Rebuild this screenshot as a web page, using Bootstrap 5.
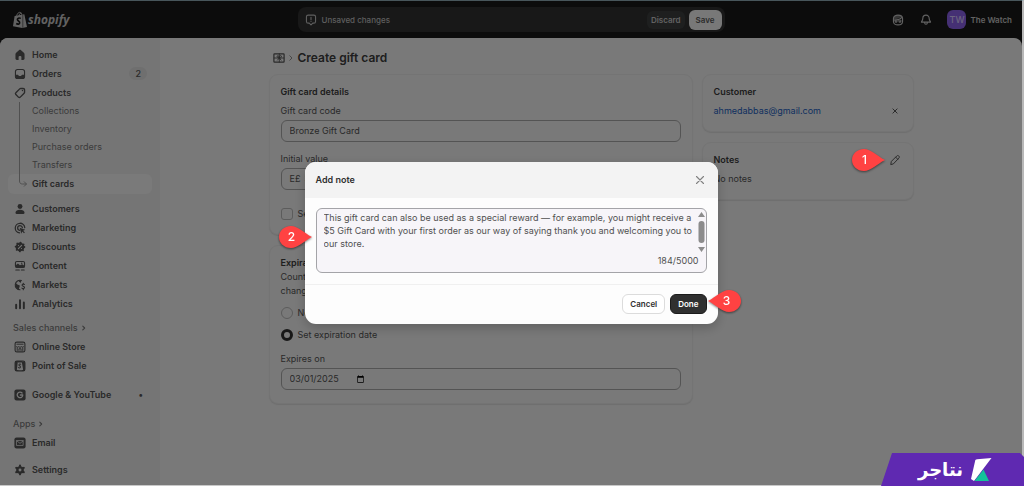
<!DOCTYPE html>
<html lang="en">
<head>
<meta charset="utf-8">
<meta name="viewport" content="width=device-width, initial-scale=1">
<title>Create gift card</title>
<link href="https://cdn.jsdelivr.net/npm/bootstrap@5.3.0/dist/css/bootstrap.min.css" rel="stylesheet">
<style>
  :root { --ink: #545454; --muted: #787878; --line: #a8a8a8; }
  body { font-family: Inter, "Liberation Sans", sans-serif; font-size: 9px; line-height: 14px; color: var(--ink); background: #181818; }
  .frame { border-top: 1px solid #90acb6; border-right: 2px solid #b8b8b8; border-bottom: 1px solid #c8c8c8; }
  .ico { width: 14px; height: 14px; flex: none; fill: none; stroke: currentColor; stroke-width: 1.6; stroke-linecap: round; stroke-linejoin: round; }
  .ico .solid { fill: currentColor; stroke: none; }
  .ico .cut { stroke: #ebebeb; }
  a { text-decoration: none; color: inherit; }
  .plain { border: 0; background: none; padding: 0; color: inherit; display: flex; }

  .topbar { display: grid; grid-template-columns: 1fr minmax(0, 427px) 1fr; height: 37px; color: #c4c4c4; font-size: 8px; }
  .wordmark { font-family: "Open Sans", sans-serif; font-style: italic; font-weight: 700; font-size: 12px; line-height: 18px; }
  .savebar { background: #303030; border-radius: 8px; height: 25px; color: #bdbdbd; font-weight: 500; padding: 0 3px 0 6px; }
  .savebar button { font-weight: 600; border: 0; border-radius: 6px; padding: 2px 4px; }
  .savebar .save { padding: 3px 7px; background: #f0f0f0; color: #585858; }
  .discard { background: #3c3f3f; color: #c4c4c4; }
  .account { gap: 14px; padding-right: 10px; }
  .avatar { width: 19px; height: 19px; border-radius: 6px; background: #8a60e8; color: #d8c8ff; font-size: 9px; font-weight: 500; }

  .shell { background: #f2f2f2; border-radius: 8px 8px 0 0; overflow: hidden; }
  .side { width: 160px; background: #ebebeb; padding: 7px 8px 0; font-weight: 600; }
  .side ul { list-style: none; margin: 0; padding: 0; }
  .side li > a { display: flex; align-items: center; gap: 5px; height: 19px; padding: 0 5px; border-radius: 6px; }
  .side .subnav a { height: 18px; padding-left: 24px; font-weight: 400; color: var(--muted); }
  .side .subnav .current { height: 20px; background: #f4f4f4; color: var(--ink); font-weight: 600; }
  .side .group { margin-top: 5px; }
  .side .apart { margin-top: 10px; }
  .branch { position: absolute; left: 11px; top: 0; width: 8px; height: 88px; color: #a0a0a0; }
  .side .heading { font-weight: 500; color: var(--muted); padding-left: 5px; height: 19px; }
  .side .heading .ico { width: 12px; height: 12px; stroke-width: 2; }
  .count { background: #dedede; border-radius: 7px; padding: 0 6px; font-weight: 500; line-height: 13px; margin-left: auto; }

  .content { width: 100%; max-width: 645px; padding-top: 11px; }
  .crumbs { padding-left: 4px; margin-bottom: 7px; }
  .crumbs .ico { width: 12px; height: 12px; stroke-width: 2; }
  .title { font-size: 12px; line-height: 18px; font-weight: 600; margin: 0 0 0 5px; }
  .columns { display: grid; grid-template-columns: 2fr 1fr; gap: 9px; align-items: start; }
  .stack { display: grid; gap: 10px; }
  .panel { background: #f2f2f2; border: 1px solid #e8e8e8; border-radius: 9px; box-shadow: 0 1px 1px #dcdcdc; padding: 10px 11px 13px; }
  .panel h2 { font-size: 9px; line-height: 14px; font-weight: 600; margin: 0; }
  .panel h2, .title { color: #3c3c3c; }
  .caption { display: block; margin-top: 10px; }
  h2 + .caption, .row-line { margin-top: 5px; }
  .field { display: flex; align-items: center; border: 1px solid var(--line); border-radius: 6px; height: 22px; padding: 0 8px; margin-top: 2px; }
  .field input { border: 0; background: transparent; padding: 0; color: inherit; font: inherit; min-width: 0; outline: 0; }
  .field input[type=date] { width: 77px; }
  .choice { display: flex; align-items: center; gap: 5px; margin-top: 8px; }
  .field + .choice { margin-top: 17px; }
  .tick { appearance: none; width: 12px; height: 12px; margin: 0; border: 1px solid #b8b8b8; border-radius: 3px; }
  .tick[type=radio] { border-radius: 50%; }
  .tick[type=radio]:checked { border: 3px solid #303030; }
  .mail { color: #1c5fc0; }

  .modal { padding-right: 2px; }
  .modal-backdrop { --bs-backdrop-bg: #000; --bs-backdrop-opacity: .5; width: calc(100vw - 2px); height: calc(100vh - 1px); }
  .modal-dialog { --bs-modal-width: 413px; }
  .modal-content { border: 0; border-radius: 11px; background: #fdfdfd; color: #303030; box-shadow: 0 4px 12px rgba(0,0,0,.2); }
  .modal-header { background: #f3f3f3; border: 0; border-radius: 11px 11px 0 0; padding: 0 11px; height: 36px; }
  .modal-header h1 { font-size: 9px; line-height: 14px; font-weight: 600; margin: 0; }
  .modal-body { padding: 10px 11px 11px; }
  .modal-footer { border-top: 1px solid #f0f0f0; padding: 9px 11px 10px; gap: 5px; }
  .modal-footer > * { margin: 0; }
  .modal-footer button { font-size: 8px; line-height: 14px; font-weight: 600; border-radius: 6px; padding: 2px 7px; border: 1px solid #dcdcdc; background: #fff; color: #303030; }
  .modal-footer .done { background: #303030; border-color: #1c1c1c; color: #fff; }
  .note { border: 1px solid #a4a4a8; border-radius: 6px; background: #f7f5f9; padding: 2px 7px 4px; color: #505050; }
  .note textarea { display: block; width: 100%; height: 43px; border: 0; padding: 0; background: transparent; font: inherit; line-height: 13px; color: inherit; resize: none; overflow: hidden; outline: 0; white-space: pre; }
  .scroller { position: absolute; right: 1px; top: 2px; width: 7px; height: 42px; }

  .pin { position: absolute; width: 34px; height: 24px; z-index: 1070; color: #fff; font-size: 12px; line-height: 22px; text-align: center; font-weight: 500; }
  .pin svg { position: absolute; inset: 0; filter: drop-shadow(0 1px 1px rgba(0,0,0,.5)); }
  .pin span { position: relative; display: block; width: 26px; }
  .pin.flip svg { transform: scaleX(-1); }
  .pin.flip span { margin-left: 7px; }
  .pin-notes { right: 16px; top: -4px; }
  .pin-text { left: -38px; top: 17px; }
  .pin-done { right: -34px; top: -4px; }
  .brand-tag { position: fixed; right: 0; bottom: 0; width: 143px; height: 33px; z-index: 1080; background: #5f29b1; clip-path: polygon(11px 0, 139px 0, 143px 4px, 143px 100%, 0 100%); color: #fff; padding-right: 32px; gap: 8px; font-family: "DejaVu Sans", sans-serif; font-weight: 700; font-size: 18px; line-height: 24px; }
</style>
</head>
<body>
<div class="frame min-vh-100 d-flex flex-column">
  <header class="topbar align-items-center">
    <a href="#" class="d-flex align-items-center ms-2 ps-1" aria-label="Shopify">
      <svg width="16" height="18" viewBox="0 0 16 18" aria-hidden="true"><path fill="#c4c4c4" d="M2.6 5 11 3.4l1.300-.1L15 16 10.300 17 1 15.300Z"/><path fill="none" stroke="#c4c4c4" d="M4.500 5.500C5 2.500 7 .8 8.300 1.500S10 4 10 4M7 5c.2-2 1.500-3.500 2.600-2.800"/><path d="M10.800 3.600v13.200" stroke="#181818" stroke-width=".5"/><path fill="none" stroke="#181818" stroke-width="1.600" d="M8.800 7.400C7 6.500 5.200 7.200 5.400 8.700c.2 1.300 2.500 1.400 2.300 3.100-.2 1.500-2 1.700-3.500.7"/></svg>
      <span class="wordmark">shopify</span>
    </a>
    <div class="savebar d-flex align-items-center gap-1">
      <svg class="ico" viewBox="0 0 20 20"><path d="M6 3h8a2.500 2.500 0 0 1 2.500 2.500V12a2.500 2.500 0 0 1-2.500 2.500h-1.500L10 17l-2.500-2.500H6A2.500 2.500 0 0 1 3.500 12V5.500A2.500 2.500 0 0 1 6 3ZM10 6v3.500M10 12v.1"/></svg>
      <span class="me-auto">Unsaved changes</span>
      <button type="button" class="discard">Discard</button>
      <button type="button" class="save">Save</button>
    </div>
    <div class="account d-flex align-items-center justify-content-end">
      <button class="plain" type="button" aria-label="Sidekick"><svg class="ico" viewBox="0 0 20 20"><path d="M3.500 8c0-3 3-5 6.500-5s6.500 2 6.500 5v4c0 3-3 5-6.500 5s-6.500-2-6.500-5ZM4 10c5 0 9-1 11-3.500M6 10.500V12q0 1 1.200 1T8.500 12v-1.500M11.500 10.500V12q0 1 1.200 1T14 12v-1.500"/><path class="solid" d="M4 8c0-3 3-5 6-5 3 0 4 1 5 2-2 2-6 4-11 4Z" opacity=".5"/></svg></button>
      <button class="plain" type="button" aria-label="Notifications"><svg class="ico" viewBox="0 0 20 20"><path d="M10 3c-2.800 0-4.500 2-4.500 4.500 0 3-1.500 4-2 5.500h13c-.5-1.500-2-2.500-2-5.500C14.500 5 12.800 3 10 3ZM8 13.500c0 3.500 4 3.500 4 0"/></svg></button>
      <button class="plain align-items-center gap-1" type="button"><span class="avatar d-flex align-items-center justify-content-center">TW</span><span class="fw-semibold">The Watch</span></button>
    </div>
  </header>

  <div class="shell d-flex flex-grow-1">
    <nav class="side flex-shrink-0" aria-label="Main">
      <ul>
        <li><a href="#"><svg class="ico" viewBox="0 0 20 20"><path class="solid" d="M3.500 9c0-1 .3-1.700 1-2.300l4-3.600c.9-.8 2.100-.8 3 0l4 3.600c.7.600 1 1.300 1 2.300v6c0 1.200-.8 2-2 2H12v-4c0-2-4-2-4 0v4H5.500c-1.200 0-2-.8-2-2Z"/></svg>Home</a></li>
        <li><a href="#"><svg class="ico" viewBox="0 0 20 20"><rect x="3.500" y="3.500" width="13" height="13" rx="3"/><path class="solid" d="M3.500 11H7c.6 0 .8 2 3 2s2.400-2 3-2h3.500v3a3 3 0 0 1-3 3h-7a3 3 0 0 1-3-3Z"/></svg>Orders<span class="count">2</span></a></li>
        <li><a href="#"><svg class="ico" viewBox="0 0 20 20"><path d="M11 3.500h3.500c1.200 0 2 .8 2 2V9c0 .6-.2 1-.6 1.400l-5.500 5.500c-.8.8-1.900.8-2.700 0l-3.600-3.600c-.8-.8-.8-1.900 0-2.700l5.500-5.500c.4-.4.800-.6 1.400-.6Z" stroke-width="2"/><circle class="solid" cx="13.500" cy="6.500" r="1"/></svg>Products</a>
          <ul class="subnav position-relative">
            <li><a href="#">Collections</a></li>
            <li><a href="#">Inventory</a></li>
            <li><a href="#">Purchase orders</a></li>
            <li><a href="#">Transfers</a></li>
            <li><a href="#" class="current" aria-current="page">Gift cards</a></li>
            <li class="branch" aria-hidden="true"><svg class="d-block" width="8" height="88" fill="none" stroke="currentColor"><path d="M.5 0v79c0 2 1 3 3 3h4M5 79.500l2.500 2.500L5 84.500"/></svg></li>
          </ul>
        </li>
      </ul>
      <ul class="group">
        <li><a href="#"><svg class="ico" viewBox="0 0 20 20"><circle class="solid" cx="10" cy="6.500" r="3.500"/><path class="solid" d="M3.500 15.500c0-3 3-4.500 6.500-4.500s6.500 1.500 6.500 4.500c0 1-.6 1.500-1.500 1.500H5c-.9 0-1.500-.5-1.500-1.500Z"/></svg>Customers</a></li>
        <li><a href="#"><svg class="ico" viewBox="0 0 20 20"><path d="M9.500 16.800A6.800 6.800 0 1 1 16.800 9.500M9.500 13.300A3.400 3.400 0 1 1 13.400 9.500" stroke-width="1.800"/><path class="solid" d="m9.500 9.500 8 3-3 1.300 2.500 2.500-1.300 1.300-2.500-2.500-1.200 3Z"/></svg>Marketing</a></li>
        <li><a href="#"><svg class="ico" viewBox="0 0 20 20"><circle class="solid" cx="10" cy="10" r="6.300"/><circle cx="10" cy="10" r="6.300" stroke-width="2.600" stroke-dasharray=".1 4.850"/><path class="cut" d="m7.700 12.300 4.600-4.600M7.800 7.900h.1M12.100 12.200h.1"/></svg>Discounts</a></li>
        <li><a href="#"><svg class="ico" viewBox="0 0 20 20"><rect x="3.500" y="3.500" width="13" height="8.500" rx="2"/><path class="solid" d="m4 9 3-2.500L10 9l3-1.500 3.500 2V12H4Z"/><circle class="solid" cx="12.500" cy="6" r="1"/><path d="M4 15.800h5M12 15.800h4"/></svg>Content</a></li>
        <li><a href="#"><svg class="ico" viewBox="0 0 20 20"><path d="M12 3.500A6.800 6.800 0 1 0 10 16.800"/><path class="solid" d="M4 8c2 0 2 2 4 2s2 2 1 3.500 0 2 0 3.300C6 16.500 3 13.500 3.500 9ZM8 3.500c0 2 1.500 1.500 2 3s2-.5 2-3.500Z"/><path d="M16.300 9.300c-1.500-1-3.300-.3-3.300 1s3.500 1.500 3.500 3.200-2.300 2-3.800 1M14.700 7.500v1.200M14.700 15.500v1.300"/></svg>Markets</a></li>
        <li><a href="#"><svg class="ico" viewBox="0 0 20 20"><path d="M4.500 11v5M10 4.500V16M15.500 8v8" stroke-width="2.800"/></svg>Analytics</a></li>
      </ul>
      <div class="heading group d-flex align-items-center">Sales channels<svg class="ico" viewBox="0 0 20 20"><path d="m8 7 3 3-3 3"/></svg></div>
      <ul>
        <li><a href="#"><svg class="ico" viewBox="0 0 20 20"><rect x="3" y="3" width="14" height="14" rx="2.500"/><path d="M5.500 6h9M5 9.500c1 1 2 1 2.500 0 1 1 4 1 5 0 .5 1 1.500 1 2.500 0M6 11v4M14 11v4M8.500 15v-2.500h3V15" stroke-width="1.400"/></svg>Online Store</a></li>
        <li><a href="#"><svg class="ico" viewBox="0 0 20 20"><rect x="3" y="3" width="14" height="14" rx="2.500"/><path class="solid" d="M3 3h4L5.500 15.500 9 17H3ZM12.500 4H17v13h-5l2.500-1.500ZM7 3h6v2H7Z"/><path d="M11 7.500c-1.500-.8-2.800 0-2.500 1.200s2.300 1 2.100 2.700-1.800 1.500-2.900.9" stroke-width="1.500"/></svg>Point of Sale</a></li>
      </ul>
      <ul class="apart">
        <li><a href="#"><svg class="ico" viewBox="0 0 20 20"><rect class="solid" x="2" y="2" width="16" height="16" rx="3"/><path class="cut" d="M13 7.200A4 4 0 1 0 14 10h-3.500" stroke-width="1.800"/></svg>Google &amp; YouTube<span class="ms-auto pe-1" aria-hidden="true">•</span></a></li>
      </ul>
      <div class="heading apart d-flex align-items-center">Apps<svg class="ico" viewBox="0 0 20 20"><path d="m8 7 3 3-3 3"/></svg></div>
      <ul>
        <li><a href="#"><svg class="ico" viewBox="0 0 20 20"><rect class="solid" x="2" y="2" width="16" height="16" rx="3"/><path class="cut" d="M5.500 6.500h9v7h-9ZM5.500 7l4.500 3.500L14.500 7" stroke-width="1.100"/></svg>Email</a></li>
      </ul>
      <ul class="mt-2">
        <li><a href="#"><svg class="ico" viewBox="0 0 20 20"><circle cx="10" cy="10" r="3.800" stroke-width="3.400"/><path d="M10 3.800v1M10 15.200v1M4.600 6.900l1 .6M14.400 12.500l1 .6M4.600 13.100l1-.6M14.400 7.500l1-.6" stroke-width="3"/></svg>Settings</a></li>
      </ul>
    </nav>

    <main class="flex-grow-1 d-flex justify-content-center">
      <div class="content">
        <div class="crumbs d-flex align-items-center">
          <svg class="ico" viewBox="0 0 20 20"><rect x="1.500" y="3" width="17" height="14" rx="1"/><path d="M2 10h16M10.500 3v14M10.500 10c-4.500 0-4.500-4-2.200-4 1.700 0 2.200 4 2.200 4s.5-4 2.200-4c2.300 0 2.300 4-2.200 4l-3 3.500M10.500 10l3 3.500" stroke-width="1.500"/></svg>
          <svg width="8" height="12" viewBox="0 0 8 12" fill="none" stroke="#909090"><path d="m4.500 3.500 2.500 2.500-2.500 2.500"/></svg>
          <h1 class="title">Create gift card</h1>
        </div>
        <div class="columns">
          <form class="stack">
            <section class="panel">
              <h2>Gift card details</h2>
              <label class="caption" for="code">Gift card code</label>
              <div class="field"><input id="code" class="w-100" type="text" value="Bronze Gift Card"></div>
              <label class="caption" for="value">Initial value</label>
              <div class="field"><span class="me-1">E£</span><input id="value" class="w-100" type="text" value="300"></div>
              <label class="choice"><input type="checkbox" class="tick">Set gift card code</label>
            </section>
            <section class="panel">
              <h2>Expiration date</h2>
              <p class="m-0">Countries have different laws for gift card expiry dates. Check local laws before<br>changing this date.</p>
              <label class="choice"><input type="radio" name="expiry" class="tick">No expiration date</label>
              <label class="choice"><input type="radio" name="expiry" class="tick" checked>Set expiration date</label>
              <label class="caption" for="expires">Expires on</label>
              <div class="field"><input id="expires" type="date" value="2025-03-01"></div>
            </section>
          </form>
          <aside class="stack">
            <section class="panel">
              <h2>Customer</h2>
              <div class="row-line d-flex align-items-center justify-content-between">
                <a class="mail" href="#">ahmedabbas@gmail.com</a>
                <button type="button" class="plain" aria-label="Remove customer"><svg class="ico" viewBox="0 0 20 20"><path d="m7 7 6 6M13 7l-6 6" stroke-width="1.400"/></svg></button>
              </div>
            </section>
            <section class="panel">
              <div class="d-flex align-items-center justify-content-between position-relative">
                <h2>Notes</h2>
                <div class="pin pin-notes"><svg width="34" height="24" viewBox="0 0 34 24"><path fill="#ff4242" d="M12 0C5 0 0 5 0 11s5 11 12 11c7 0 13-7 21-11C25 7 19 0 12 0Z"/></svg><span>1</span></div>
                <button type="button" class="plain" aria-label="Edit notes"><svg class="ico" viewBox="0 0 20 20"><path d="m4 16 .8-4L12.500 4.300c1-1 2.200-.8 3 0s1 2 0 3L8 15.200ZM11 6l3 3" stroke-width="1.400"/></svg></button>
              </div>
              <p class="row-line mb-0">No notes</p>
            </section>
          </aside>
        </div>
      </div>
    </main>
  </div>
</div>

<div class="modal-backdrop show"></div>
<div class="modal d-block" role="dialog" aria-modal="true" aria-labelledby="note-title">
  <div class="modal-dialog modal-dialog-centered my-0 min-vh-100">
    <div class="modal-content">
      <div class="modal-header">
        <h1 id="note-title">Add note</h1>
        <button type="button" class="plain" aria-label="Close"><svg class="ico" viewBox="0 0 20 20"><path d="m5 5 10 10M15 5 5 15" stroke="#808080" stroke-width="1.600"/></svg></button>
      </div>
      <div class="modal-body">
        <div class="note position-relative">
          <textarea aria-label="Note">This gift card can also be used as a special reward — for example, you might receive a
$5 Gift Card with your first order as our way of saying thank you and welcoming you to
our store.</textarea>
          <svg class="scroller" viewBox="0 0 7 42" fill="#8c8c8c" aria-hidden="true"><path d="M3.500 1 7 6H0ZM3.500 41 0 36h7Z"/><rect x=".5" y="10" width="6" height="22" rx="3"/></svg>
          <div class="text-end">184/5000</div>
          <div class="pin pin-text"><svg width="34" height="24" viewBox="0 0 34 24"><path fill="#ff4242" d="M12 0C5 0 0 5 0 11s5 11 12 11c7 0 13-7 21-11C25 7 19 0 12 0Z"/></svg><span>2</span></div>
        </div>
      </div>
      <div class="modal-footer">
        <button type="button">Cancel</button>
        <div class="position-relative">
          <button type="button" class="done d-block">Done</button>
          <div class="pin flip pin-done"><svg width="34" height="24" viewBox="0 0 34 24"><path fill="#ff4242" d="M12 0C5 0 0 5 0 11s5 11 12 11c7 0 13-7 21-11C25 7 19 0 12 0Z"/></svg><span>3</span></div>
        </div>
      </div>
    </div>
  </div>
</div>

<div class="brand-tag d-flex align-items-center justify-content-end">
  <span lang="ar" dir="rtl">نتاجر</span>
  <svg width="21" height="24" viewBox="0 0 21 24" aria-hidden="true"><path fill="#fff" d="M4 3.500C4 2 5 1.500 6 1.300L20.500 0 3 23 0 21Z"/><path fill="#12c39a" d="M12.500 11.500 18 23H3.500Z"/></svg>
</div>
<script src="https://cdn.jsdelivr.net/npm/bootstrap@5.3.0/dist/js/bootstrap.bundle.min.js"></script>
</body>
</html>
